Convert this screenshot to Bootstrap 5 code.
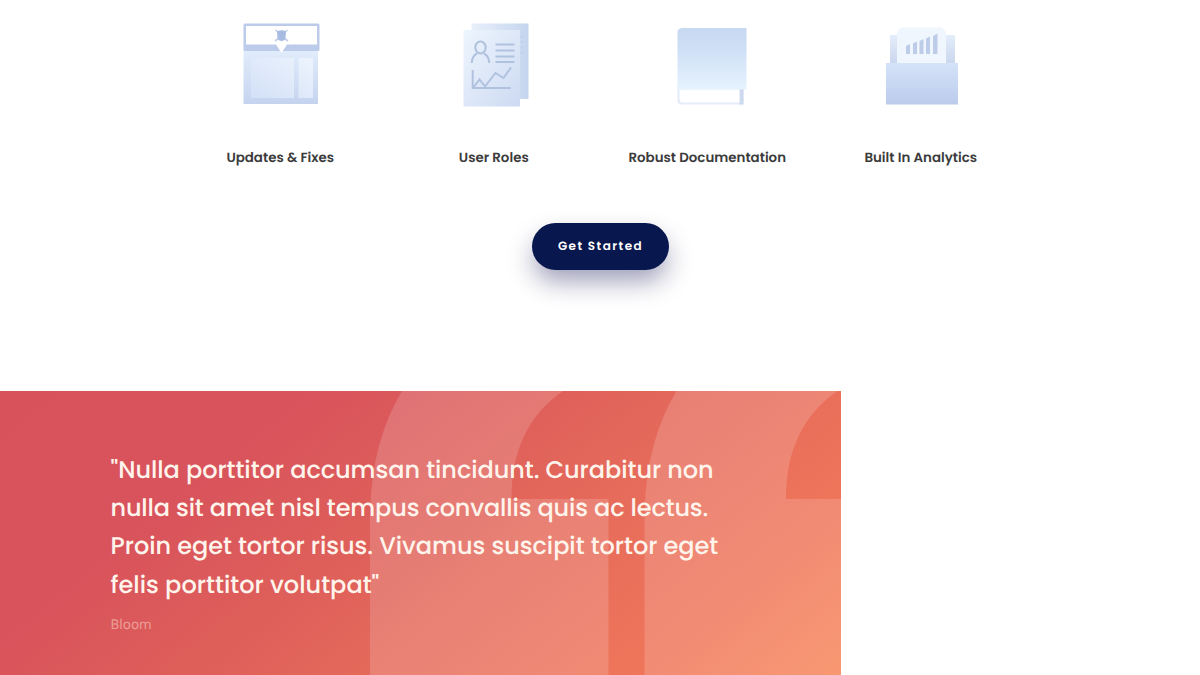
<!DOCTYPE html>
<html lang="en">
<head>
<meta charset="utf-8">
<meta name="viewport" content="width=device-width, initial-scale=1">
<title>Features</title>
<link href="https://cdn.jsdelivr.net/npm/bootstrap@5.3.0/dist/css/bootstrap.min.css" rel="stylesheet">
<style>
body{font-family:Poppins,Inter,"Open Sans",sans-serif;background:#fff;overflow:hidden;height:675px;text-rendering:geometricPrecision}
.features{width:854px;margin-left:173.5px;padding-top:10px;height:391px}
.feature-art{width:100px;height:105px;display:block}
.feature-title{font-size:13.4px;line-height:20px;font-weight:600;color:#3b3b3b;margin:33px 0 0;white-space:nowrap}
.cta{width:137px;height:47px;margin-top:55px;background:#08174d!important;border:0;color:#fff!important;font-size:12px;font-weight:600;box-shadow:0 13px 26px -2px rgba(22,22,85,.42);letter-spacing:1.45px;padding:1px 0 0;white-space:nowrap}
.testimonial{width:841px;height:284px;background:linear-gradient(141deg,#d8525b 0%,#d8535b 26%,#e0625a 50%,#e66b5b 62%,#ef755a 82%,#f78558 100%)}
.quote-mark{inset:0;width:841px;height:284px}
.quote-body{padding:61px 0 0 110.500px}
.quote-line{font-size:24px;line-height:38.2px;font-weight:500;color:#fff4ec;white-space:nowrap;letter-spacing:-.05px}
.quote-line:nth-child(2){letter-spacing:-.14px}
.quote-line:nth-child(4){letter-spacing:.02px}
.author{font-family:"Noto Sans","Open Sans",sans-serif;font-size:13.5px;line-height:20px;color:rgba(255,225,215,.5);margin-top:9.500px}
</style>
</head>
<body>
<section class="features text-center">
  <div class="row g-0">
    <div class="col-3 d-flex flex-column align-items-center">
      <svg class="feature-art" viewBox="0 0 100 105">
        <defs>
          <linearGradient id="pale" x2="0" y2="1"><stop stop-color="#e1edfb"/><stop offset="1" stop-color="#c6d3ef"/></linearGradient>
          <linearGradient id="pane" x1="0" y1="1" x2="1" y2="0"><stop stop-color="#d3e0f7"/><stop offset="1" stop-color="#edf4fd"/></linearGradient>
        </defs>
        <path fill="url(#pale)" d="M13.500 40H88V94H13.500z"/>
        <path fill="url(#pane)" d="M21 48H64V88H21zM68.500 48H83V88H68.500z"/>
        <rect x="13.500" y="13.500" width="76" height="27.500" rx="1.500" fill="#bccbe9"/>
        <path fill="#fff" d="M16 16H87V34.500H57L51.500 43 46 34.500H16z"/>
        <path d="M45.500 20L49 23M57.500 20L54 23M45 31L49 28M58 31L54 28" stroke="#c0ceea" stroke-width="1.600"/>
        <path fill="#a8bce2" d="M47 21.500Q51.500 19 56 21.500L55.500 28Q54.500 31 51.500 31Q48.500 31 47.500 28z"/>
      </svg>
      <h2 class="feature-title">Updates &amp; Fixes</h2>
    </div>
    <div class="col-3 d-flex flex-column align-items-center">
      <svg class="feature-art" viewBox="-6 0 100 105">
        <defs>
          <linearGradient id="sheet" x2="1" y2="1"><stop stop-color="#edf5fd"/><stop offset="1" stop-color="#cddaf2"/></linearGradient>
          <linearGradient id="side"><stop stop-color="#e8f0fb"/><stop offset="1" stop-color="#c5d4ee"/></linearGradient>
        </defs>
        <path fill="url(#side)" d="M21.500 13.500H78.500V89H21.500z"/>
        <path fill="url(#sheet)" d="M13.500 20H70V96.500H13.500z"/>
        <path d="M71 27h2M71 32h2M71 37h2M71 43h2" stroke="#b7c8e6"/>
        <g fill="none" stroke="#b1c2df" stroke-width="2">
          <ellipse cx="30.500" cy="37.500" rx="5.200" ry="6"/>
          <path d="M21.700 53Q22 46 27 43.500M34 43.500Q39 46 39.300 53M45.500 34.500H64.500M45.500 40.500H64.500M45.500 46.500H64.500M45.500 52H64.500M22.700 60V78H61M23 78L29.500 69.500 35 76.500 45.500 63 53.500 68 61 57.500"/>
        </g>
      </svg>
      <h2 class="feature-title">User Roles</h2>
    </div>
    <div class="col-3 d-flex flex-column align-items-center">
      <svg class="feature-art" viewBox="-7.500 0 100 105">
        <defs><linearGradient id="cover" x2="0" y2="1"><stop stop-color="#c8d8f1"/><stop offset=".35" stop-color="#d0e0f6"/><stop offset="1" stop-color="#e9f5ff"/></linearGradient></defs>
        <path fill="#e4ecf8" d="M13 75H79V94.500H17Q13 94.500 13 90z"/>
        <path fill="#ccd9ee" d="M75 79H79V94.500H75z"/>
        <path fill="#fff" d="M15 81Q15 79.500 17 79.500H75V92.500H18Q15 92.500 15 89z"/>
        <path fill="url(#cover)" d="M17 18H82V79.500H17Q14 80 13 85V22Q13 19 17 18z"/>
      </svg>
      <h2 class="feature-title">Robust Documentation</h2>
    </div>
    <div class="col-3 d-flex flex-column align-items-center">
      <svg class="feature-art" viewBox="-4 0 100 105">
        <defs>
          <linearGradient id="box" x2="0" y2="1"><stop stop-color="#d5e3f8"/><stop offset="1" stop-color="#bbcbeb"/></linearGradient>
          <linearGradient id="tab" x2="0" y2="1"><stop stop-color="#e4edfa"/><stop offset="1" stop-color="#c9d6ed"/></linearGradient>
        </defs>
        <path fill="url(#tab)" d="M15 25H80V54H15z"/>
        <path fill="#f0f6fd" d="M26 17.500H67L71 22V54H22V22z"/>
        <path fill="url(#box)" d="M11 53H83V94.500H11z"/>
        <path fill="#bdcce8" d="M31 36L35 34V44H31zM38 33.500L42 31.500V44H38zM44.500 31L48.500 29V44H44.500zM51 28.500L55 26.500V44H51zM58 26L62.500 23.500V44H58z"/>
      </svg>
      <h2 class="feature-title">Built In Analytics</h2>
    </div>
  </div>
  <a href="#" class="cta btn rounded-pill d-inline-flex align-items-center justify-content-center">Get Started</a>
</section>
<section class="testimonial position-relative">
  <svg class="quote-mark position-absolute" viewBox="0 0 841 284" fill="#fff" fill-opacity=".16">
    <path d="M402 0Q370 53 370 129V284H608.500V108H511.500Q511 36 563 0z"/>
    <path d="M676.500 0Q644.500 53 644.500 129V284H841V108H786Q785.500 36 837.500 0z"/>
  </svg>
  <figure class="quote-body position-relative m-0">
    <blockquote class="m-0">
      <span class="quote-line d-block">"Nulla porttitor accumsan tincidunt. Curabitur non</span>
      <span class="quote-line d-block">nulla sit amet nisl tempus convallis quis ac lectus.</span>
      <span class="quote-line d-block">Proin eget tortor risus. Vivamus suscipit tortor eget</span>
      <span class="quote-line d-block">felis porttitor volutpat"</span>
    </blockquote>
    <figcaption class="author">Bloom</figcaption>
  </figure>
</section>
<script src="https://cdn.jsdelivr.net/npm/bootstrap@5.3.0/dist/js/bootstrap.bundle.min.js"></script>
</body>
</html>
